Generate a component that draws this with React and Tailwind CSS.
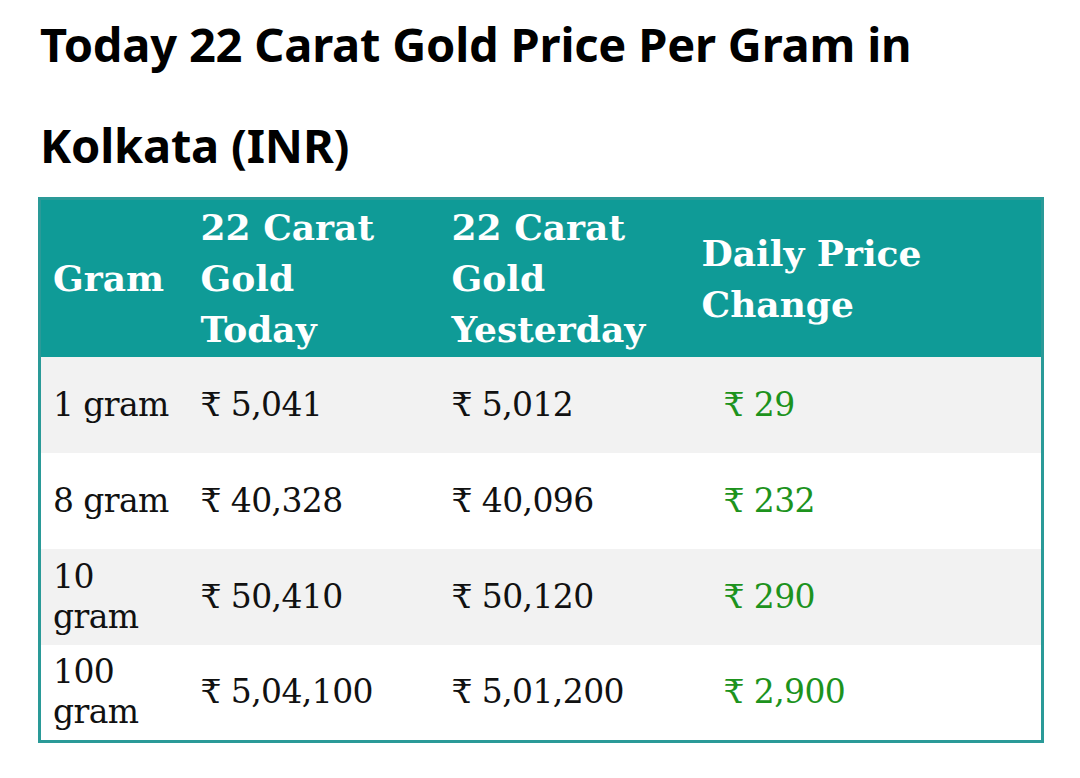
const rows = [
  { gram: '1 gram', today: '₹ 5,041', yesterday: '₹ 5,012', change: '₹ 29' },
  { gram: '8 gram', today: '₹ 40,328', yesterday: '₹ 40,096', change: '₹ 232' },
  { gram: '10 gram', today: '₹ 50,410', yesterday: '₹ 50,120', change: '₹ 290' },
  { gram: '100 gram', today: '₹ 5,04,100', yesterday: '₹ 5,01,200', change: '₹ 2,900' },
]

const serif = "font-['DejaVu_Serif','Noto_Serif',serif]"

export default function App() {
  return (
    <div className="bg-white w-[1080px] h-[778px] overflow-hidden pl-[38px] pr-[39px]">
      <h1 className="-mt-[6px] pl-[2px] font-['Noto_Sans','Open_Sans',sans-serif] font-bold text-[47px] leading-[101px] text-black tracking-[-0.2px] h-[203px]">
        Today 22 Carat Gold Price Per Gram in Kolkata (INR)
      </h1>
      <table className={`w-[1003px] table-fixed border-collapse border-[3px] border-[#2a9a98] ${serif}`}>
        <colgroup>
          <col className="w-[149px]" />
          <col className="w-[251px]" />
          <col className="w-[250px]" />
          <col className="w-[353px]" />
        </colgroup>
        <thead>
          <tr className="bg-[#0f9b97] text-white h-[157px]">
            <th className="text-left align-middle font-bold text-[36px] leading-[51px] pl-[12px] pr-[6px] py-[2px]">Gram</th>
            <th className="text-left align-middle font-bold text-[36px] leading-[51px] pl-[12px] pr-[30px] py-[2px]">22 Carat Gold Today</th>
            <th className="text-left align-middle font-bold text-[36px] leading-[51px] pl-[12px] pr-[4px] py-[2px] whitespace-nowrap">22 Carat<br />Gold<br />Yesterday</th>
            <th className="text-left align-middle font-bold text-[36px] leading-[51px] pl-[12px] pr-[60px] py-[2px]">Daily Price Change</th>
          </tr>
        </thead>
        <tbody>
          {rows.map((r, i) => (
            <tr key={r.gram} className={`${i % 2 === 0 ? 'bg-[#f2f2f2]' : 'bg-white'} h-[96px]`}>
              <td className="align-middle text-[33px] leading-[40px] text-[#111] pl-[12px] pr-[4px] tracking-[-0.6px]">{r.gram}</td>
              <td className="align-middle text-[33px] leading-[40px] text-[#111] pl-[12px] tracking-[-0.6px]">{r.today}</td>
              <td className="align-middle text-[33px] leading-[40px] text-[#111] pl-[12px] tracking-[-0.6px]">{r.yesterday}</td>
              <td className="align-middle text-[33px] leading-[40px] text-[#1d931d] pl-[34px] tracking-[-0.6px]">{r.change}</td>
            </tr>
          ))}
        </tbody>
      </table>
    </div>
  )
}
